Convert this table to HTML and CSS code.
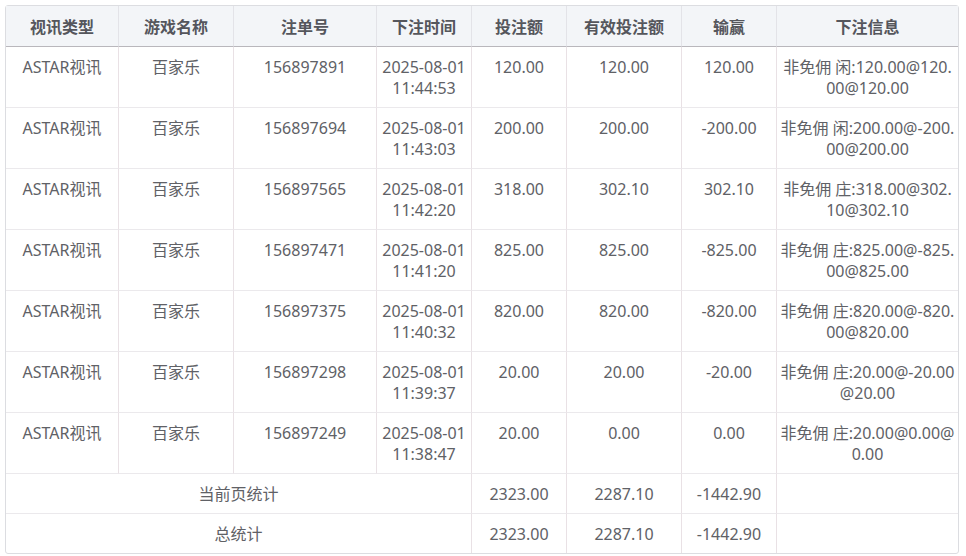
FILE: index.html
```html
<!DOCTYPE html>
<html lang="zh-CN">
<head>
<meta charset="utf-8">
<title>注单列表</title>
<link rel="stylesheet" href="styles.css">
</head>
<body>
<div class="wrap">
<table class="grid">
  <colgroup>
    <col class="c1"><col class="c2"><col class="c3"><col class="c4"><col class="c5"><col class="c6"><col class="c7"><col class="c8">
  </colgroup>
  <thead>
    <tr><th>视讯类型</th><th>游戏名称</th><th>注单号</th><th>下注时间</th><th>投注额</th><th>有效投注额</th><th>输赢</th><th>下注信息</th></tr>
  </thead>
  <tbody>
    <tr><td>ASTAR视讯</td><td>百家乐</td><td>156897891</td><td>2025-08-01 11:44:53</td><td>120.00</td><td>120.00</td><td>120.00</td><td class="info">非免佣 闲:120.00@120.00@120.00</td></tr>
    <tr><td>ASTAR视讯</td><td>百家乐</td><td>156897694</td><td>2025-08-01 11:43:03</td><td>200.00</td><td>200.00</td><td>-200.00</td><td class="info">非免佣 闲:200.00@-200.00@200.00</td></tr>
    <tr><td>ASTAR视讯</td><td>百家乐</td><td>156897565</td><td>2025-08-01 11:42:20</td><td>318.00</td><td>302.10</td><td>302.10</td><td class="info">非免佣 庄:318.00@302.10@302.10</td></tr>
    <tr><td>ASTAR视讯</td><td>百家乐</td><td>156897471</td><td>2025-08-01 11:41:20</td><td>825.00</td><td>825.00</td><td>-825.00</td><td class="info">非免佣 庄:825.00@-825.00@825.00</td></tr>
    <tr><td>ASTAR视讯</td><td>百家乐</td><td>156897375</td><td>2025-08-01 11:40:32</td><td>820.00</td><td>820.00</td><td>-820.00</td><td class="info">非免佣 庄:820.00@-820.00@820.00</td></tr>
    <tr><td>ASTAR视讯</td><td>百家乐</td><td>156897298</td><td>2025-08-01 11:39:37</td><td>20.00</td><td>20.00</td><td>-20.00</td><td class="info">非免佣 庄:20.00@-20.00@20.00</td></tr>
    <tr><td>ASTAR视讯</td><td>百家乐</td><td>156897249</td><td>2025-08-01 11:38:47</td><td>20.00</td><td>0.00</td><td>0.00</td><td class="info">非免佣 庄:20.00@0.00@0.00</td></tr>
    <tr class="sum"><td colspan="4">当前页统计</td><td>2323.00</td><td>2287.10</td><td>-1442.90</td><td></td></tr>
    <tr class="sum"><td colspan="4">总统计</td><td>2323.00</td><td>2287.10</td><td>-1442.90</td><td></td></tr>
  </tbody>
</table>
</div>
</body>
</html>
```

FILE: styles.css
```css
html, body {
  margin: 0;
  padding: 0;
  background: #ffffff;
}
.wrap {
  padding: 5px 8px 0 5px;
}
.grid {
  width: 953px;
  table-layout: fixed;
  border-collapse: separate;
  border-spacing: 0;
  border: 1px solid #dcdde1;
  border-radius: 3px;
  font-family: "Noto Sans", "Open Sans", "Noto Sans CJK SC", sans-serif;
  font-size: 16px;
  line-height: 21px;
  color: #606166;
}
.c1 { width: 113px; }
.c2 { width: 115px; }
.c3 { width: 143px; }
.c4 { width: 95px; }
.c5 { width: 95px; }
.c6 { width: 115px; }
.c7 { width: 95px; }
.c8 { width: 181px; }
.grid th, .grid td {
  padding: 10px 3px 8px;
  text-align: center;
  vertical-align: top;
  border-bottom: 1px solid #ebe9ec;
  border-right: 1px solid #e9e1e5;
}
.grid th:last-child, .grid td:last-child {
  border-right: none;
}
.grid th {
  padding-top: 11px;
  background: #f3f5f8;
  font-weight: 700;
  color: #55565c;
  border-bottom: 1px solid #b9b7bc;
  border-right-color: #e3e3e8;
}
.grid tbody tr:last-child td {
  border-bottom: none;
}
.grid td.info {
  word-break: break-all;
  padding-left: 2px;
  padding-right: 2px;
}
```
